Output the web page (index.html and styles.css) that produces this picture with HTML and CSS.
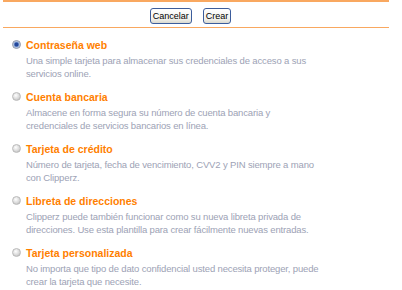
FILE: index.html
```html
<!DOCTYPE html>
<html>
<head>
<meta charset="utf-8">
<link rel="stylesheet" href="styles.css">
</head>
<body>
<div class="toolbar">
  <button class="btn">Cancelar</button>
  <button class="btn">Crear</button>
</div>
<ul class="options">
  <li class="option">
    <div class="head"><span class="radio checked"></span><span class="title">Contraseña web</span></div>
    <p class="desc">Una simple tarjeta para almacenar sus credenciales de acceso a sus servicios online.</p>
  </li>
  <li class="option">
    <div class="head"><span class="radio"></span><span class="title">Cuenta bancaria</span></div>
    <p class="desc">Almacene en forma segura su número de cuenta bancaria y credenciales de servicios bancarios en línea.</p>
  </li>
  <li class="option">
    <div class="head"><span class="radio"></span><span class="title">Tarjeta de crédito</span></div>
    <p class="desc">Número de tarjeta, fecha de vencimiento, CVV2 y PIN siempre a mano con Clipperz.</p>
  </li>
  <li class="option">
    <div class="head"><span class="radio"></span><span class="title">Libreta de direcciones</span></div>
    <p class="desc">Clipperz puede también funcionar como su nueva libreta privada de direcciones. Use esta plantilla para crear fácilmente nuevas entradas.</p>
  </li>
  <li class="option">
    <div class="head"><span class="radio"></span><span class="title">Tarjeta personalizada</span></div>
    <p class="desc">No importa que tipo de dato confidencial usted necesita proteger, puede crear la tarjeta que necesite.</p>
  </li>
</ul>
</body>
</html>
```

FILE: styles.css
```css
html, body {
  margin: 0;
  padding: 0;
  background: #ffffff;
  font-family: "Liberation Sans", Arial, sans-serif;
}

.toolbar {
  margin-left: 3px;
  width: 375px;
  height: 25px;
  border-top: 2px solid #f9a860;
  border-bottom: 1px solid #f9a860;
  display: flex;
  justify-content: center;
  align-items: center;
  gap: 11px;
  padding-right: 11px;
  box-sizing: content-box;
}

.btn {
  font-family: "Liberation Sans", Arial, sans-serif;
  font-size: 9px;
  color: #000;
  height: 16px;
  padding: 0 2px;
  line-height: 14px;
  border: 1px solid #3c5d9c;
  border-radius: 3px;
  background: linear-gradient(#ffffff, #f2f2ec 70%, #d9d9d0);
  margin-top: 2px;
}

.options {
  list-style: none;
  margin: 0;
  padding: 9px 0 0 12px;
}

.option {
  margin-bottom: 9px;
}

.head {
  display: flex;
  align-items: center;
  gap: 5px;
  height: 15px;
}

.radio {
  width: 7px;
  height: 7px;
  border-radius: 50%;
  background: radial-gradient(circle at 40% 35%, #ffffff, #d6d6d6 60%, #acacac);
  border: 1px solid #bababa;
  box-sizing: content-box;
  flex: none;
  margin-top: -1px;
}

.radio.checked {
  background: radial-gradient(circle, #24479a 0 1.5px, #7e9fd6 2.5px, #d8dce6 3.5px);
  border-color: #8a94a8;
}

.title {
  font-size: 10.5px;
  font-weight: bold;
  color: #ff7f00;
}

.desc {
  margin: 2px 0 0 14px;
  width: 295px;
  font-size: 9.5px;
  letter-spacing: -0.15px;
  line-height: 13px;
  color: #9da2b5;
}
```
